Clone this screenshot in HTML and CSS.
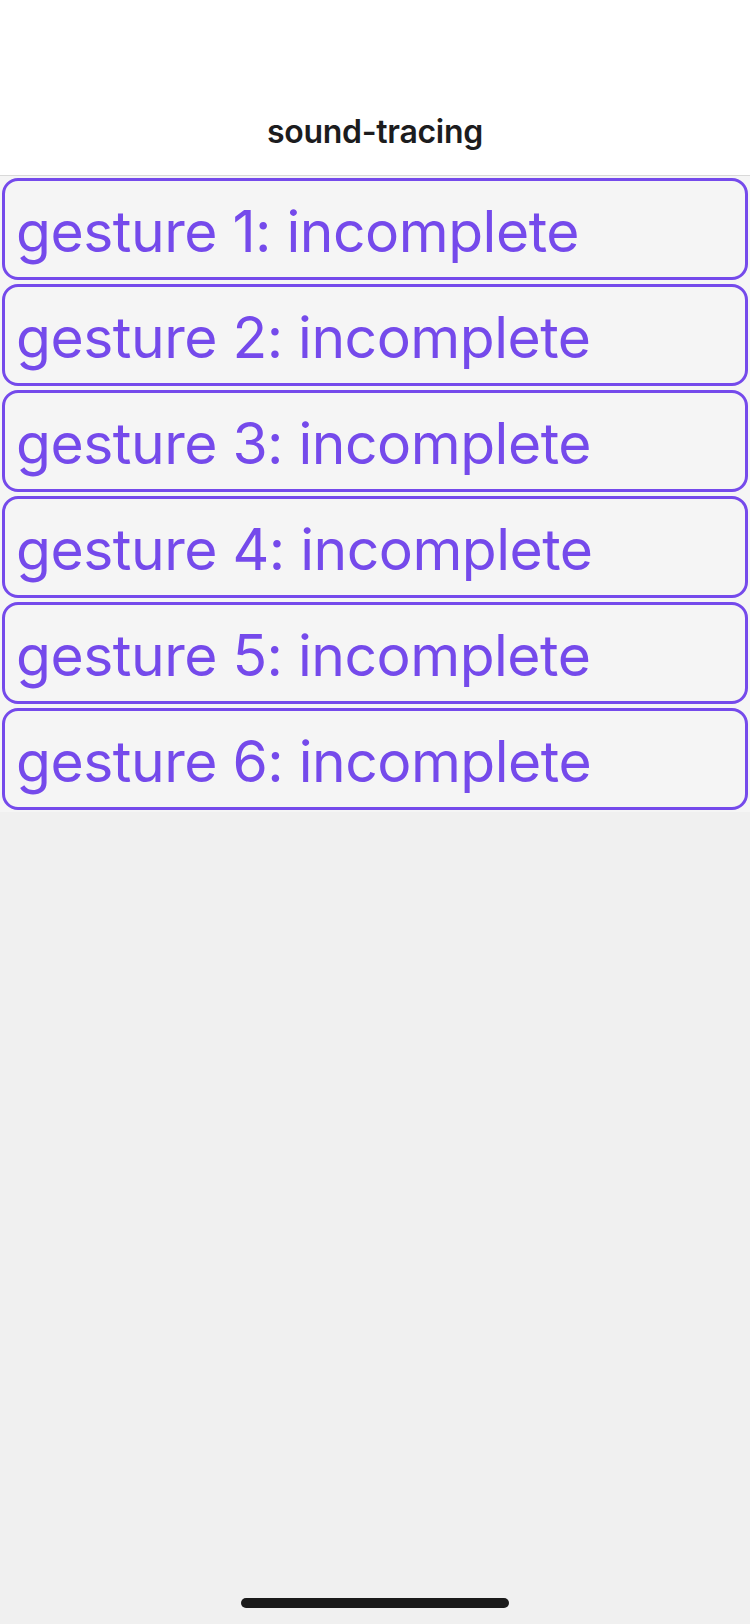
FILE: index.html
```html
<!DOCTYPE html>
<html>
<head>
<meta charset="utf-8">
<link rel="stylesheet" href="styles.css">
</head>
<body>
<div class="screen">
  <header class="navbar">
    <h1 class="title">sound-tracing</h1>
  </header>
  <main class="list">
    <div class="card">gesture 1: incomplete</div>
    <div class="card">gesture 2: incomplete</div>
    <div class="card">gesture 3: incomplete</div>
    <div class="card">gesture 4: incomplete</div>
    <div class="card">gesture 5: incomplete</div>
    <div class="card">gesture 6: incomplete</div>
  </main>
  <div class="spacer"></div>
  <div class="home-area">
    <div class="home-indicator"></div>
  </div>
</div>
</body>
</html>
```

FILE: styles.css
```css
html, body {
  margin: 0;
  padding: 0;
  background: #f0f0f0;
}
.screen {
  width: 750px;
  height: 1624px;
  display: flex;
  flex-direction: column;
  background: #f0f0f0;
  font-family: Inter, "Noto Sans", sans-serif;
}
.navbar {
  height: 175px;
  background: #ffffff;
  border-bottom: 1px solid #d9d9d9;
  display: flex;
  align-items: flex-end;
  justify-content: center;
  flex-shrink: 0;
}
.title {
  margin: 0;
  height: 88px;
  line-height: 90px;
  font-size: 32px;
  font-weight: 600;
  letter-spacing: -0.3px;
  color: #1c1c1e;
}
.list {
  background: #f5f5f5;
  display: flex;
  flex-direction: column;
  padding: 0;
}
.card {
  margin: 2px;
  height: 90px;
  padding-top: 6px;
  border: 3px solid #754aeb;
  border-radius: 16px;
  background: #f5f5f5;
  color: #754aeb;
  font-size: 57px;
  line-height: 90px;
  letter-spacing: -0.5px;
  padding-left: 11px;
  white-space: nowrap;
}
.spacer {
  flex: 1;
}
.home-area {
  height: 42px;
  display: flex;
  justify-content: center;
  align-items: flex-start;
  flex-shrink: 0;
}
.home-indicator {
  margin-top: 16px;
  width: 268px;
  height: 10px;
  border-radius: 5px;
  background: #1a1a1a;
}
```
